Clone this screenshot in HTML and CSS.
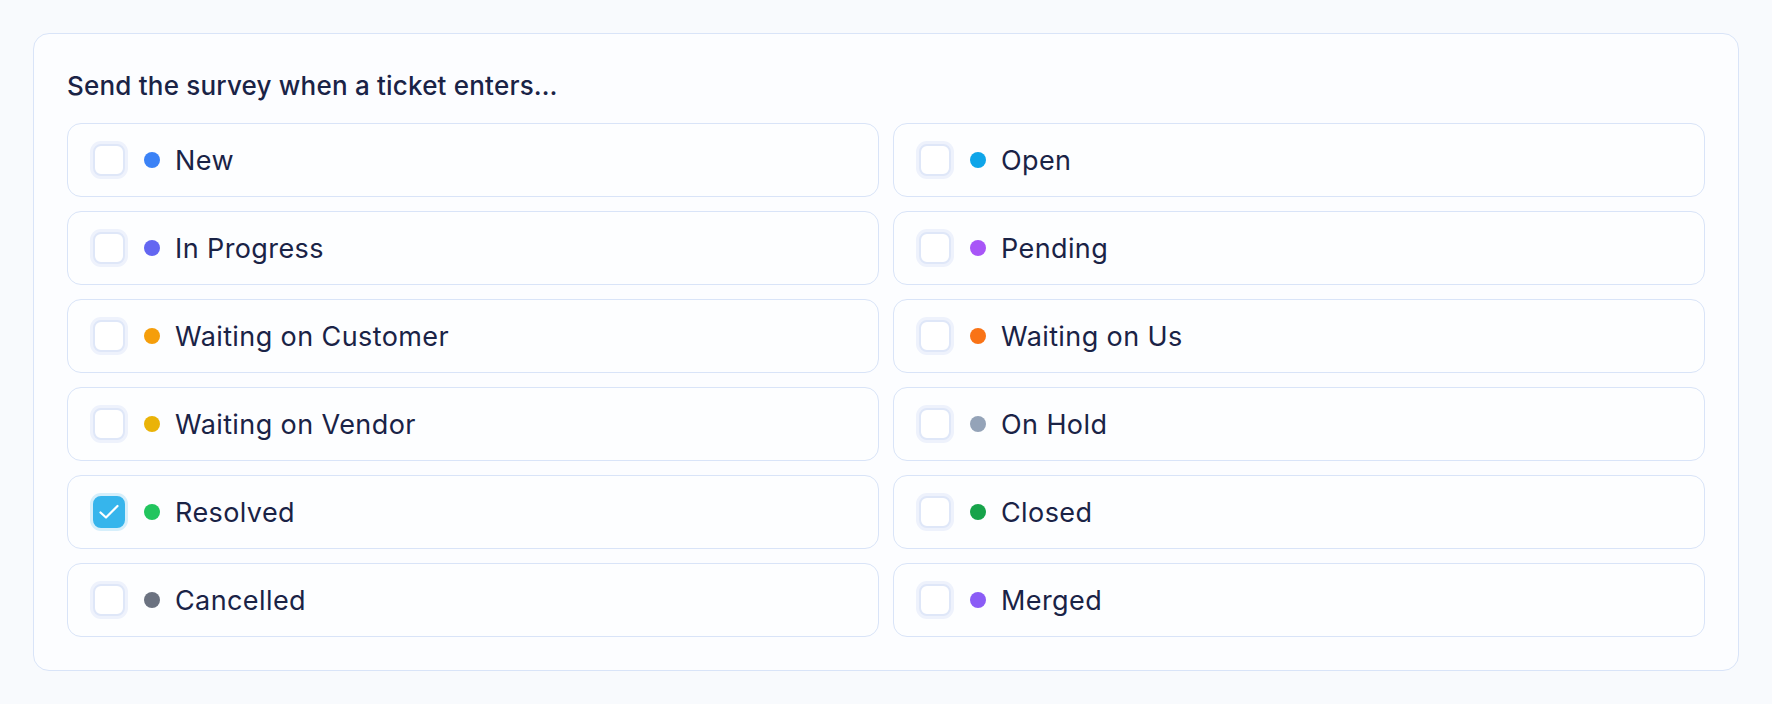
FILE: index.html
```html
<!DOCTYPE html>
<html>

<head>
    <meta charset="utf-8">
    <title>Survey trigger</title>
    <link rel="stylesheet" href="styles.css">
</head>

<body>
    <section class="card">
        <h2 class="card-title">Send the survey when a ticket enters…</h2>
        <div class="status-grid">
            <label class="status">
                <span class="box"></span>
                <span class="dot dot-new"></span>
                New
            </label>
            <label class="status">
                <span class="box"></span>
                <span class="dot dot-open"></span>
                Open
            </label>
            <label class="status">
                <span class="box"></span>
                <span class="dot dot-progress"></span>
                In Progress
            </label>
            <label class="status">
                <span class="box"></span>
                <span class="dot dot-pending"></span>
                Pending
            </label>
            <label class="status">
                <span class="box"></span>
                <span class="dot dot-customer"></span>
                Waiting on Customer
            </label>
            <label class="status">
                <span class="box"></span>
                <span class="dot dot-us"></span>
                Waiting on Us
            </label>
            <label class="status">
                <span class="box"></span>
                <span class="dot dot-vendor"></span>
                Waiting on Vendor
            </label>
            <label class="status">
                <span class="box"></span>
                <span class="dot dot-hold"></span>
                On Hold
            </label>
            <label class="status">
                <span class="box checked">
                    <svg viewBox="0 0 24 24" width="24" height="24">
                        <polyline points="3.5 12.5 9 17.5 20.5 6" />
                    </svg>
                </span>
                <span class="dot dot-resolved"></span>
                Resolved
            </label>
            <label class="status">
                <span class="box"></span>
                <span class="dot dot-closed"></span>
                Closed
            </label>
            <label class="status">
                <span class="box"></span>
                <span class="dot dot-cancelled"></span>
                Cancelled
            </label>
            <label class="status">
                <span class="box"></span>
                <span class="dot dot-merged"></span>
                Merged
            </label>
        </div>
    </section>
</body>

</html>
```

FILE: styles.css
```css
body {
    margin: 0;
    background: #f8fafd;
    font-family: Inter, 'Noto Sans', sans-serif;
    color: #1a2346;
}

.card {
    margin: 33px;
    padding: 34px 33px 33px;
    border: 1px solid #d9e4f8;
    border-radius: 16px;
    background: #fcfdff;
}

.card-title {
    margin: 0 0 19px;
    font-size: 26px;
    line-height: 36px;
    font-weight: 500;
    letter-spacing: 0.2px;
}

.status-grid {
    display: grid;
    grid-template-columns: 1fr 1fr;
    gap: 14px;
}

.status {
    display: flex;
    align-items: center;
    height: 72px;
    padding: 0 25px;
    border: 1px solid #d9e4f8;
    border-radius: 14px;
    background: #fdfeff;
    font-size: 27px;
    letter-spacing: 0.4px;
    cursor: pointer;
}

.box {
    display: flex;
    align-items: center;
    justify-content: center;
    box-sizing: border-box;
    width: 32px;
    height: 32px;
    border: 2px solid #dfe7f8;
    border-radius: 8px;
    background: #fff;
    box-shadow: 0 0 0 3px #eef2fc;
}

.box.checked {
    border-color: #36b5ec;
    background: #36b5ec;
    box-shadow: 0 0 0 3px #d6effb;
}

.box svg {
    flex: none;
    fill: none;
    stroke: #fff;
    stroke-width: 2.2;
    stroke-linecap: round;
    stroke-linejoin: round;
}

.dot {
    width: 16px;
    height: 16px;
    margin: 0 15px 0 19px;
    border-radius: 50%;
}

.dot-new { background: #3b82f6; }
.dot-open { background: #0ea5e9; }
.dot-progress { background: #6366f1; }
.dot-pending { background: #a855f7; }
.dot-customer { background: #f59e0b; }
.dot-us { background: #f97316; }
.dot-vendor { background: #eab308; }
.dot-hold { background: #94a3b8; }
.dot-resolved { background: #22c55e; }
.dot-closed { background: #16a34a; }
.dot-cancelled { background: #6b7280; }
.dot-merged { background: #8b5cf6; }
```
